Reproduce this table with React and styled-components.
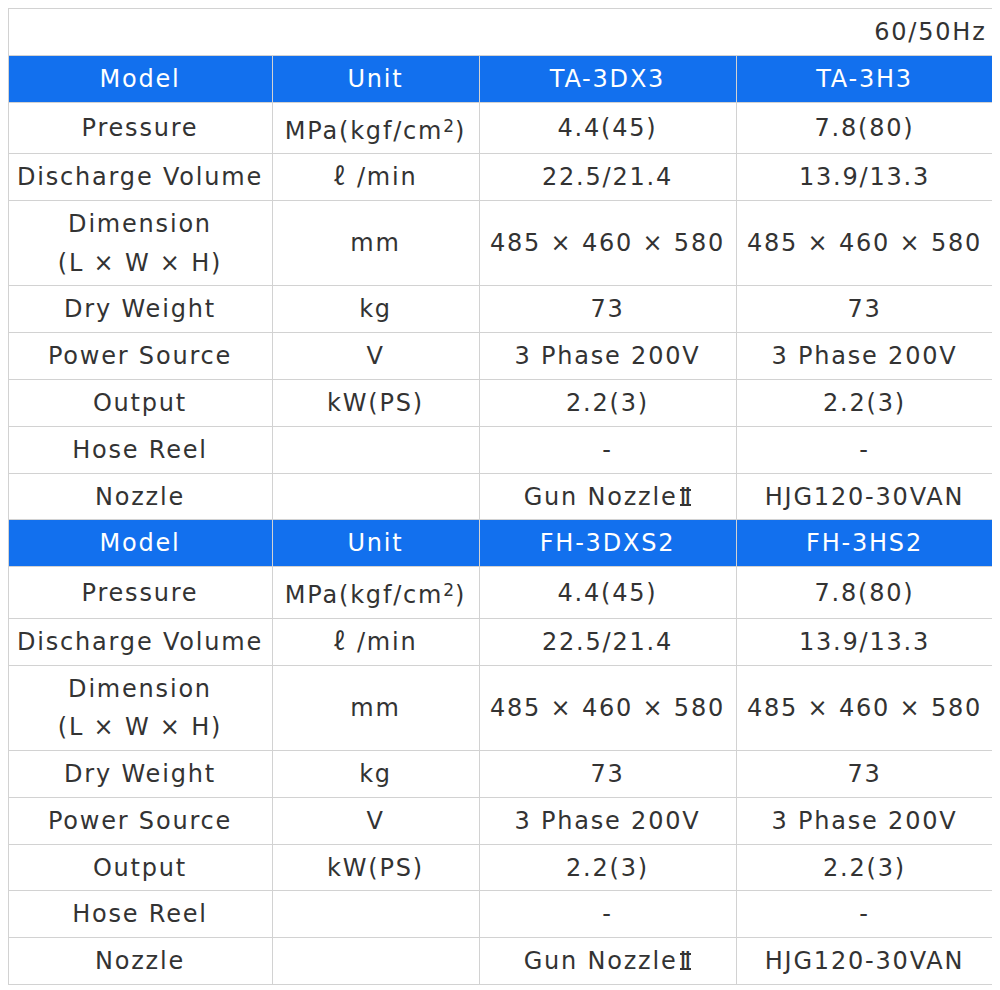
import React from "react";
import styled, { createGlobalStyle } from "styled-components";

const Global = createGlobalStyle`
  body { margin: 8px; background: #fff; }
`;

const Table = styled.table`
  width: 985px;
  margin-left: -0.5px;
  border-collapse: collapse;
  font-family: "DejaVu Sans", Verdana, sans-serif;
  font-size: 24px;
  letter-spacing: 1.8px;
  line-height: 38.4px;
  color: #333;
  table-layout: fixed;
`;

const Cell = styled.td`
  border: 1px solid #d2d2d2;
  padding: 4px 2px 3.4px;
  text-align: ${(p) => (p.$right ? "right" : "center")};
  padding-right: ${(p) => (p.$right ? "6px" : "2px")};
  white-space: nowrap;
`;

const Head = styled.th`
  border: 1px solid #d2d2d2;
  background: #1270ee;
  color: #fff;
  font-weight: normal;
  padding: 4px 2px 3.4px;
  text-align: center;
`;

const Sup = styled.span`
  font-size: 17px;
  line-height: 38px;
  vertical-align: 7px;
  letter-spacing: 1px;
`;

const Script = styled.span`
  font-family: "Noto Sans CJK JP", sans-serif;
  line-height: 0;
  letter-spacing: 0;
  margin-right: 3px;
`;

const Roman = styled.span`
  display: inline-block;
  font-family: "DejaVu Sans", sans-serif;
  font-size: 24px;
  letter-spacing: 0;
  line-height: 13px;
  height: 13px;
  border-top: 2px solid #333;
  border-bottom: 2px solid #333;
  padding: 0;
  margin-left: 2px;
`;

const specs = () => [
  ["Pressure", <>MPa(kgf/cm<Sup>2</Sup>)</>, "4.4(45)", "7.8(80)"],
  ["Discharge Volume", <><Script>ℓ</Script> /min</>, "22.5/21.4", "13.9/13.3"],
  [<>Dimension<br />(L × W × H)</>, "mm", "485 × 460 × 580", "485 × 460 × 580"],
  ["Dry Weight", "kg", "73", "73"],
  ["Power Source", "V", "3 Phase 200V", "3 Phase 200V"],
  ["Output", "kW(PS)", "2.2(3)", "2.2(3)"],
  ["Hose Reel", "", "-", "-"],
  ["Nozzle", "", <>Gun Nozzle<Roman>Ⅱ</Roman></>, "HJG120-30VAN"],
];

const Block = ({ a, b }) => (
  <>
    <tr>
      <Head>Model</Head>
      <Head>Unit</Head>
      <Head>{a}</Head>
      <Head>{b}</Head>
    </tr>
    {specs().map((r, i) => (
      <tr key={i}>
        {r.map((c, j) => (
          <Cell key={j}>{c}</Cell>
        ))}
      </tr>
    ))}
  </>
);

export default function App() {
  return (
    <>
      <Global />
      <Table>
        <colgroup>
          <col style={{ width: 264 }} />
          <col style={{ width: 207 }} />
          <col style={{ width: 257 }} />
          <col style={{ width: 257 }} />
        </colgroup>
        <tbody>
          <tr>
            <Cell colSpan={4} $right>60/50Hz</Cell>
          </tr>
          <Block a="TA-3DX3" b="TA-3H3" />
          <Block a="FH-3DXS2" b="FH-3HS2" />
        </tbody>
      </Table>
    </>
  );
}
